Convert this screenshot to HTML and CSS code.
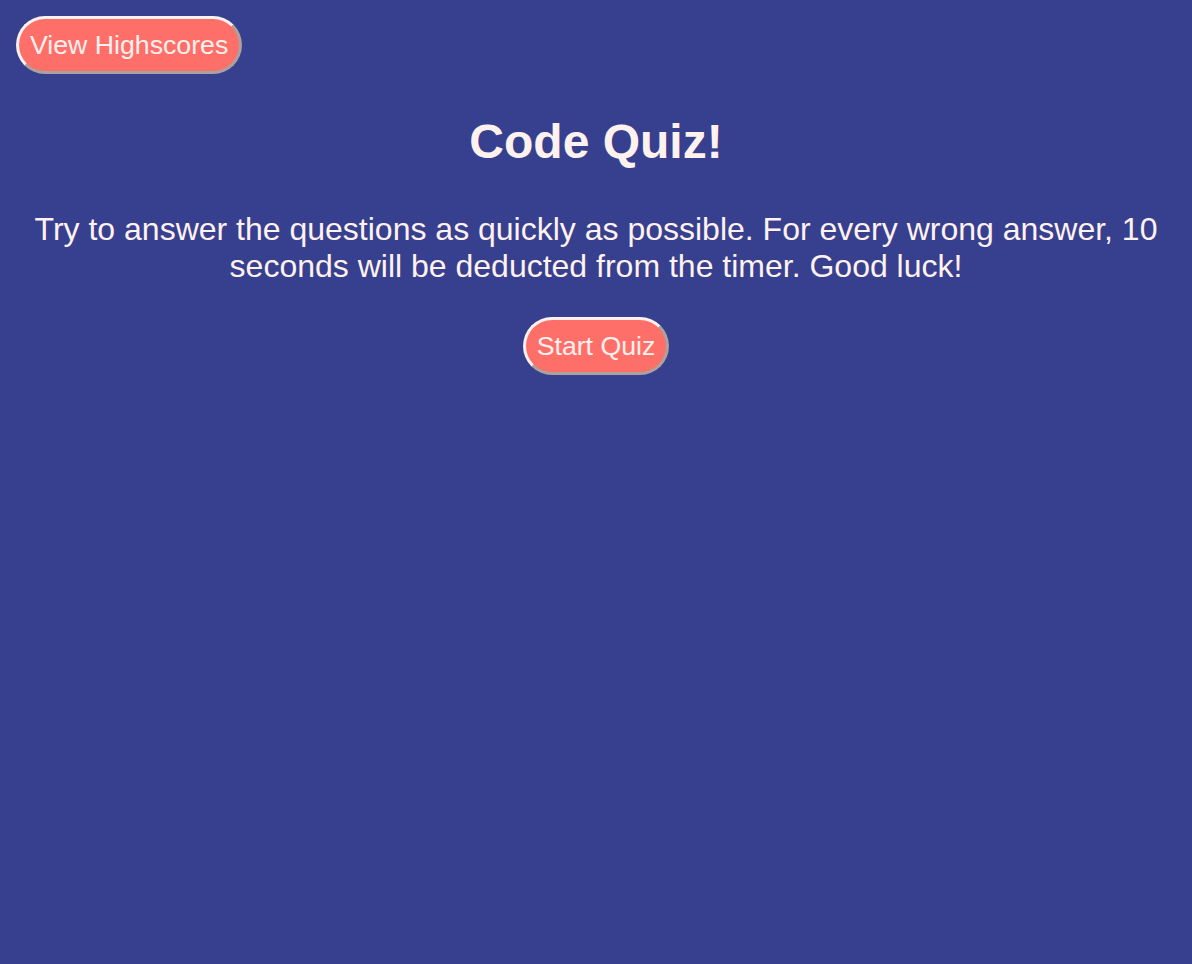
FILE: index.html
```html
<!DOCTYPE html>
<html>
<head>
<meta charset="utf-8">
<title>Code Quiz</title>
<link rel="stylesheet" href="styles.css">
</head>
<body>
<header class="top">
  <button class="btn">View Highscores</button>
</header>
<main class="intro">
  <h1 class="title">Code Quiz!</h1>
  <p class="lead">Try to answer the questions as quickly as possible. For every wrong answer, 10 seconds will be deducted from the timer. Good luck!</p>
  <button class="btn">Start Quiz</button>
</main>
</body>
</html>
```
FILE: styles.css
```css
html, body {
  background: #36408e;
}
body {
  margin: 8px;
  color: #fff1ee;
  font-family: "Liberation Sans", Arial, sans-serif;
}
.top {
  padding: 8px;
  display: flex;
}
.btn {
  font-family: "Liberation Sans", Arial, sans-serif;
  font-size: 26.7px;
  color: #fff1ee;
  background: #ff6f69;
  border: 3px outset #fff1ee;
  border-radius: 30px;
  padding: 10px 11px;
  line-height: 32px;
}
.intro {
  text-align: center;
  padding: 0 8px;
}
.title {
  font-size: 48px;
  line-height: 55px;
  margin: 32px 0 0;
}
.lead {
  font-size: 32px;
  line-height: 37px;
  margin: 42px 0 32px;
}
```
